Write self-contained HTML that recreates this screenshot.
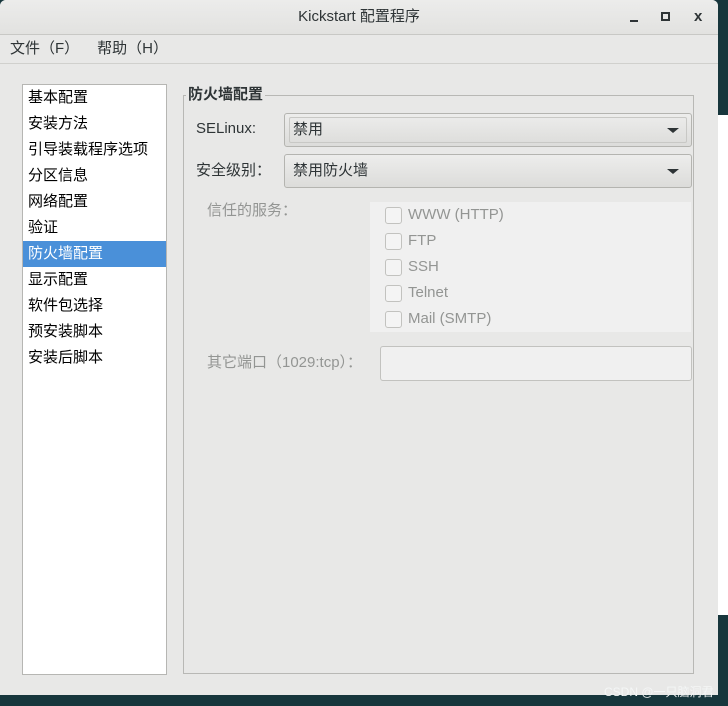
<!DOCTYPE html>
<html><head><meta charset="utf-8"><style>
*{margin:0;padding:0;box-sizing:border-box}
body{width:728px;height:706px;background:#17363c;position:relative;overflow:hidden;font-family:"Liberation Sans","Noto Sans CJK SC",sans-serif;font-size:15px;color:#2e3436}
.a{position:absolute}
.term{left:718px;top:115px;width:10px;height:500px;background:#fff}
.termh{left:718px;top:115px;width:10px;height:38px;background:#e0e0e0;border-bottom:1px solid #ccc}
.win{left:0;top:0;width:718px;height:695px;background:#e8e8e7;border-radius:6px 6px 0 0;overflow:hidden}
.title{left:0;top:0;width:718px;height:35px;background:linear-gradient(#ececeb,#e2e2e0);border-bottom:1px solid #c8c8c5;text-align:center;line-height:34px;font-size:15px;color:#2e3436}
.menu{left:0;top:35px;width:718px;height:29px;border-bottom:1px solid #d0d0cd;line-height:28px;font-size:15px}
.list{left:22px;top:84px;width:145px;height:591px;background:#fff;border:1px solid #b6b6b3}
.list div{height:26px;line-height:26px;padding-left:5px;font-size:15px;color:#000}
.list .sel{background:#4a90d9;color:#fff}
.frame{left:183px;top:95px;width:511px;height:579px;border:1px solid #b8b8b5}
.combo{left:284px;width:408px;height:34px;border:1px solid #b4b4b0;border-radius:3px;background:linear-gradient(#ededec,#dcdcda);line-height:32px;padding-left:8px}
.arr{position:absolute;right:12px;top:14px;width:0;height:0;border-left:6px solid transparent;border-right:6px solid transparent;border-top:5px solid #2e3436}
.cb{left:370px;top:202px;width:321px;height:130px;background:#f0f0f0}
.cb div{position:absolute;left:15px;height:20px;line-height:20px;color:#939593;font-size:15px;padding-left:23px}
.cb div:before{content:"";position:absolute;left:0;top:2px;width:15px;height:15px;border:1px solid #c2c2bf;border-radius:3px;background:#f4f4f4}
.lbl{font-size:15px;line-height:20px}
</style></head><body>
<div class="a termh"></div><div class="a term"></div>
<div class="a win">
<div class="a title">Kickstart 配置程序
<span class="a" style="left:630px;top:20px;width:8px;height:2px;background:#2e3436"></span>
<span class="a" style="left:661px;top:12px;width:9px;height:9px;border:2px solid #2e3436"></span>
<span class="a" style="left:694px;top:0;font-size:15px;font-weight:bold">x</span>
</div>
<div class="a menu"><span style="margin-left:10px">文件（F）</span><span style="margin-left:18px">帮助（H）</span></div>
<div class="a list"><div>基本配置</div><div>安装方法</div><div>引导装载程序选项</div><div>分区信息</div><div>网络配置</div><div>验证</div><div class="sel">防火墙配置</div><div>显示配置</div><div>软件包选择</div><div>预安装脚本</div><div>安装后脚本</div></div>
<div class="a frame"></div>
<div class="a" style="left:186px;top:85px;background:#e8e8e7;padding:0 2px;font-weight:bold;font-size:15px;line-height:20px">防火墙配置</div>
<div class="a lbl" style="left:196px;top:119px">SELinux:</div>
<div class="a combo" style="top:113px"><span style="position:absolute;left:4px;top:3px;right:4px;bottom:3px;border:1px solid #c8c8c5;border-radius:2px"></span>禁用<span class="arr"></span></div>
<div class="a lbl" style="left:196px;top:161px">安全级别：</div>
<div class="a combo" style="top:154px">禁用防火墙<span class="arr"></span></div>
<div class="a lbl" style="left:207px;top:201px;color:#939593">信任的服务：</div>
<div class="a cb"><div style="top:3px">WWW (HTTP)</div><div style="top:29px">FTP</div><div style="top:55px">SSH</div><div style="top:81px">Telnet</div><div style="top:107px">Mail (SMTP)</div></div>
<div class="a lbl" style="left:207px;top:353px;color:#939593">其它端口（1029:tcp）：</div>
<div class="a" style="left:380px;top:346px;width:312px;height:35px;border:1px solid #c2c2bf;border-radius:3px;background:#f0f0f0"></div>
</div>
<div class="a" style="left:604px;top:683px;font-size:12px;color:#f4f6f6;z-index:5">CSDN @一只脑洞君</div>
</body></html>
